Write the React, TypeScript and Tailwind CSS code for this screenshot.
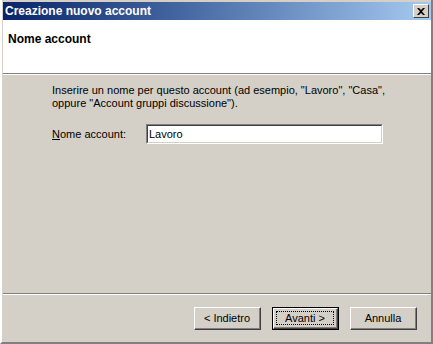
const font = { fontFamily: '"Liberation Sans", Arial, sans-serif' };

const Button = ({ label, isDefault }: { label: string; isDefault?: boolean }) => (
  <div
    className={
      isDefault
        ? "w-[67px] h-[23px] border border-black"
        : "w-[67px] h-[23px]"
    }
  >
    <div className="h-full border-t border-l border-white border-r border-b border-r-[#404040] border-b-[#404040]">
      <div className="h-full flex border-r border-b border-[#808080] bg-[#d4d0c8] text-[11px] text-black">
        {isDefault ? (
          <div className="flex-1 m-[2px] flex items-center justify-center border border-dotted border-black leading-[13px]">
            {label}
          </div>
        ) : (
          <div className="flex-1 flex items-center justify-center leading-[13px]">{label}</div>
        )}
      </div>
    </div>
  </div>
);

export default function App() {
  return (
    <div className="w-[433px] h-[344px] bg-[#d4d0c8] flex flex-col border-l-2 border-l-white border-r-2 border-r-[#808080] border-b-2 border-b-[#808080] pt-[2px] pl-[1px]" style={font}>
      {/* title bar */}
      <div className="h-[18px] flex items-center justify-between pl-[2px] pr-[2px] bg-gradient-to-r from-[#0a246a] to-[#a6caf0]">
        <span className="text-white font-bold text-[12px] leading-[14px]">Creazione nuovo account</span>
        <div className="w-[16px] h-[14px] bg-[#d4d0c8] border-t border-l border-white border-r border-b border-r-[#404040] border-b-[#404040] flex items-center justify-center">
          <svg width="8" height="7" viewBox="0 0 8 7">
            <path d="M0 0h2l2 2 2-2h2L5 3.5 8 7H6L4 5 2 7H0l3-3.5z" fill="black" />
          </svg>
        </div>
      </div>

      {/* header */}
      <div className="h-[53px] bg-white pl-[5px] pt-[12px]">
        <div className="font-bold text-[12px] leading-[14px] text-black">Nome account</div>
      </div>
      <div className="h-px bg-[#808080]" />
      <div className="h-px bg-white" />

      {/* body */}
      <div className="flex-1 pl-[49px] pt-[9px] text-[11px] text-black">
        <p className="leading-[13px]">
          Inserire un nome per questo account (ad esempio, "Lavoro", "Casa",
          <br />
          oppure "Account gruppi discussione").
        </p>
        <div className="flex items-center mt-[14px]">
          <label className="w-[94px]">
            <span className="underline">N</span>ome account:
          </label>
          <div className="w-[237px] h-[20px] border-t border-l border-[#808080] border-r border-b border-r-white border-b-white">
            <div className="h-full border-t border-l border-[#404040] border-r border-b border-r-[#d4d0c8] border-b-[#d4d0c8] bg-white flex items-center pl-[1px]">
              Lavoro
            </div>
          </div>
        </div>
      </div>

      {/* footer */}
      <div className="h-px bg-[#808080]" />
      <div className="h-px bg-white" />
      <div className="h-[47px] flex items-start justify-end pt-[12px] pr-[14px] gap-[11px]">
        <Button label="< Indietro" />
        <Button label="Avanti >" isDefault />
        <Button label="Annulla" />
      </div>
    </div>
  );
}
